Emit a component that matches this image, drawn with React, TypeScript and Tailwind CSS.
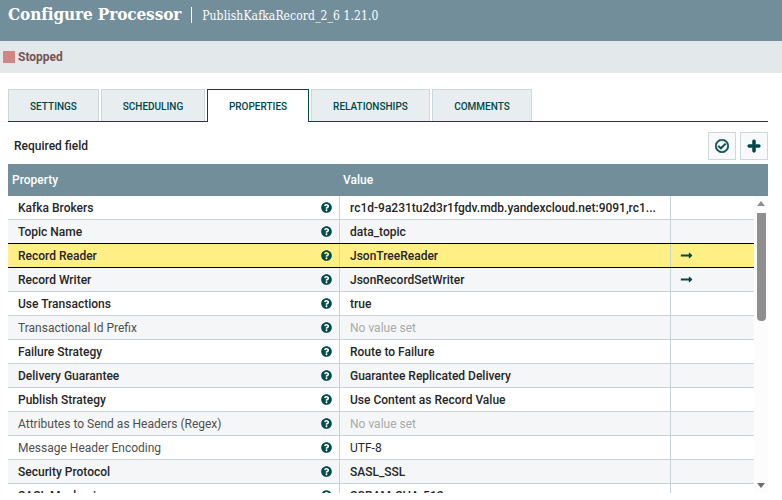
import React from "react";
import { FaQuestionCircle, FaRegCheckCircle, FaPlus, FaLongArrowAltRight } from "react-icons/fa";

interface Row {
  name: string;
  value: string;
  required?: boolean;
  unset?: boolean;
  arrow?: boolean;
  selected?: boolean;
}

const rows: Row[] = [
  { name: "Kafka Brokers", value: "rc1d-9a231tu2d3r1fgdv.mdb.yandexcloud.net:9091,rc1...", required: true },
  { name: "Topic Name", value: "data_topic", required: true },
  { name: "Record Reader", value: "JsonTreeReader", required: true, arrow: true, selected: true },
  { name: "Record Writer", value: "JsonRecordSetWriter", required: true, arrow: true },
  { name: "Use Transactions", value: "true", required: true },
  { name: "Transactional Id Prefix", value: "No value set", unset: true },
  { name: "Failure Strategy", value: "Route to Failure", required: true },
  { name: "Delivery Guarantee", value: "Guarantee Replicated Delivery", required: true },
  { name: "Publish Strategy", value: "Use Content as Record Value", required: true },
  { name: "Attributes to Send as Headers (Regex)", value: "No value set", unset: true },
  { name: "Message Header Encoding", value: "UTF-8" },
  { name: "Security Protocol", value: "SASL_SSL", required: true },
  { name: "SASL Mechanism", value: "SCRAM-SHA-512", required: true },
];

const tabs = [
  { label: "SETTINGS", width: "w-[91px]" },
  { label: "SCHEDULING", width: "w-[104px]" },
  { label: "PROPERTIES", width: "w-[102px]", active: true },
  { label: "RELATIONSHIPS", width: "w-[119px]" },
  { label: "COMMENTS", width: "w-[100px]" },
];

export default function App() {
  return (
    <div className="h-[500px] w-[782px] overflow-hidden bg-white font-['Roboto',sans-serif]">
      <div className="flex h-[41px] items-start bg-[#728e9b] pl-2 pt-[2px] text-white">
        <span className="font-['DejaVu_Serif_Condensed','DejaVu_Serif',serif] text-[17px] leading-[24px] font-bold tracking-[-0.1px]">Configure Processor</span>
        <span className="mx-[10px] mt-[5px] h-[16px] w-px bg-white" />
        <span className="mt-[3px] font-['DejaVu_Serif_Condensed','Liberation_Serif',serif] text-[12px] leading-[22px] tracking-[0.1px]">PublishKafkaRecord_2_6 1.21.0</span>
      </div>
      <div className="flex h-[32px] items-center bg-[#e3e8eb] pl-[3px]">
        <span className="h-3 w-3 bg-[#d18686]" />
        <span className="ml-[3px] text-[12px] font-bold text-[#775351]">Stopped</span>
      </div>

      <div className="mt-4 ml-2 mr-[14px] flex h-[33px] items-end gap-[2px] border-b border-[#004849]">
        {tabs.map((t) => (
          <div
            key={t.label}
            className={
              t.active
                ? `flex h-[33px] ${t.width} -mb-px items-center justify-center border border-b-0 border-[#004849] bg-white pt-px text-[10px] font-medium text-[#004849]`
                : `flex h-[32px] ${t.width} items-center justify-center border border-b-0 border-[#cbd8dc] bg-[#e8edef] pt-[2px] text-[10px] font-medium text-[#004849]`
            }
          >
            {t.label}
          </div>
        ))}
      </div>

      <div className="mt-[10px] ml-2 mr-[14px] flex h-[28px] items-center">
        <span className="ml-[6px] text-[12px] font-medium text-[#262626]">Required field</span>
        <div className="ml-auto flex gap-1">
          <div className="flex h-[28px] w-[28px] items-center justify-center border border-[#cbd8dc] bg-[#f7f9fa] text-[#004849]">
            <FaRegCheckCircle size={14} stroke="currentColor" strokeWidth={20} />
          </div>
          <div className="flex h-[28px] w-[28px] items-center justify-center border border-[#cbd8dc] bg-[#f7f9fa] text-[#004849]">
            <FaPlus size={14} stroke="currentColor" strokeWidth={30} />
          </div>
        </div>
      </div>

      <div className="mt-1 ml-2 mr-[14px] flex h-[32px] items-center bg-[#728e9b] text-[12px] font-medium text-white">
        <span className="ml-1 w-[331px]">Property</span>
        <span>Value</span>
      </div>

      <div className="ml-2 mr-[14px] flex h-[297px] overflow-hidden">
        <div className="w-[746px] shrink-0">
          {rows.map((r, i) => (
            <div
              key={r.name}
              className={`flex items-stretch border-b text-[12px] leading-[23px] ${
                r.selected
                  ? "relative z-10 -mt-px h-[25px] border-t border-black bg-[#ffef85]"
                  : i % 2 === 0
                    ? "h-[24px] border-[#c7d2d7] bg-white"
                    : "h-[24px] border-[#c7d2d7] bg-[#f4f6f7]"
              }`}
            >
              <div className="flex w-[332px] items-center border-r border-[#c7d2d7] pl-[10px] pr-[7px]">
                <span className={r.required ? "pt-[2px] font-medium text-[#262626]" : "pt-[2px] text-[#4f4f4f]"}>{r.name}</span>
                <FaQuestionCircle size={11} className="ml-auto text-[#004849]" />
              </div>
              <div className="flex w-[331px] items-center border-r border-[#c7d2d7] pl-[10px]">
                <span className={r.unset ? "pt-[2px] text-[#aaaaaa]" : r.required ? "pt-[2px] font-medium text-[#262626]" : "pt-[2px] text-[#262626]"}>{r.value}</span>
              </div>
              <div className="flex flex-1 items-center pl-[9px]">
                {r.arrow && <FaLongArrowAltRight size={13} className="text-[#004849]" />}
              </div>
            </div>
          ))}
        </div>
        <div className="flex w-[14px] shrink-0 flex-col items-center bg-[#fcfcfc]">
          <span className="mt-[5px] h-0 w-0 border-x-[4px] border-b-[5px] border-x-transparent border-b-[#8f8f8f]" />
          <span className="mt-[7px] h-[108px] w-[9px] rounded-b-[4px] bg-[#8f8f8f]" />
          <span className="mt-auto mb-[5px] h-0 w-0 border-x-[4px] border-t-[5px] border-x-transparent border-t-[#6f6f6f]" />
        </div>
      </div>
    </div>
  );
}
